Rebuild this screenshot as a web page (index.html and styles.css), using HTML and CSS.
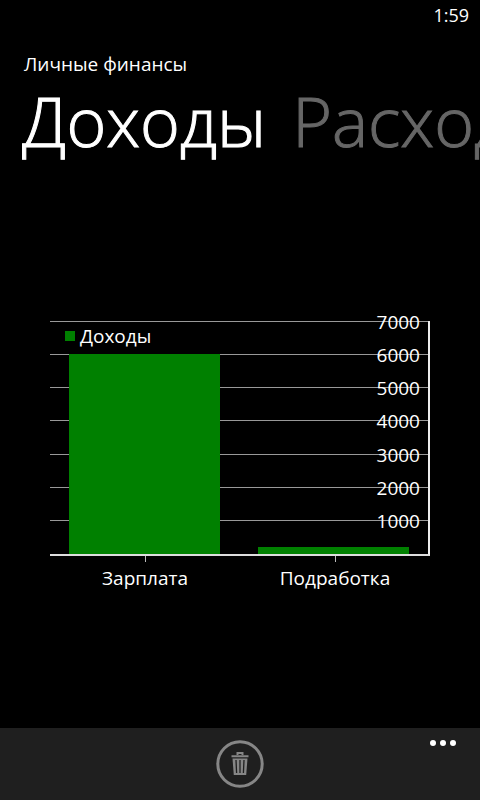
FILE: index.html
```html
<!DOCTYPE html>
<html lang="ru">
<head>
<meta charset="utf-8">
<meta name="viewport" content="width=device-width, initial-scale=1">
<title>Личные финансы</title>
<link rel="stylesheet" href="styles.css">
</head>
<body>
<div class="status"><time>1:59</time></div>
<header class="header">
  <h1 class="app-title">Личные финансы</h1>
  <nav class="pivot">
    <a class="pivot-item active" href="#income">Доходы</a>
    <a class="pivot-item" href="#expenses">Расходы</a>
  </nav>
</header>
<main class="content">
  <section class="chart">
    <div class="plot">
      <div class="grid-lines"><i></i><i></i><i></i><i></i><i></i><i></i><i></i></div>
      <div class="bars">
        <div class="bar" style="height: calc(600% / 7)"></div>
        <div class="bar" style="height: 3%"></div>
      </div>
      <ul class="scale">
        <li>7000</li><li>6000</li><li>5000</li><li>4000</li><li>3000</li><li>2000</li><li>1000</li>
      </ul>
      <div class="legend"><span class="swatch"></span>Доходы</div>
    </div>
    <div class="categories">
      <span class="category">Зарплата</span>
      <span class="category">Подработка</span>
    </div>
  </section>
</main>
<footer class="app-bar">
  <button class="delete" type="button" aria-label="Удалить">
    <svg width="48" height="48" viewBox="0 0 48 48" fill="none" stroke="#868686">
      <circle cx="24" cy="24" r="22.2" stroke-width="3"/>
      <path d="M15.5 16.2H32.5M21.5 15V13H26.5V15" stroke-width="2"/>
      <path d="M16.5 18.5H31.5L30.2 35H17.8Z" fill="#868686" stroke="none"/>
      <path d="M20 20L20.6 33M24 20V33M28 20L27.4 33" stroke="#1f1f1f" stroke-width="1.3"/>
    </svg>
  </button>
  <button class="more" type="button" aria-label="Ещё"><i></i><i></i><i></i></button>
</footer>
</body>
</html>
```
FILE: styles.css
```css
* {
  box-sizing: border-box;
}

body {
  display: flex;
  flex-direction: column;
  min-height: 100vh;
  margin: 0;
  background: #000;
  color: #fff;
  font: 19px/32px "Open Sans", "Noto Sans", sans-serif;
}

.status {
  padding: 0 11px;
  text-align: right;
  font-size: 18px;
  line-height: 30px;
}

.header {
  padding: 18px 0 0 24px;
}

.app-title {
  margin: 0;
  font-size: 19px;
  font-weight: 400;
}

.pivot {
  display: flex;
  gap: 26px;
  margin-left: -2px;
  overflow-x: clip;
  font-size: 68px;
  font-weight: 300;
  line-height: 82px;
}

.pivot-item {
  flex: none;
  color: #666;
  text-decoration: none;
  -webkit-text-stroke: 1px currentColor;
}

.pivot-item.active {
  color: #fff;
}

.content {
  display: flex;
  flex: 1;
  flex-direction: column;
  justify-content: center;
  padding: 24px 50px 0;
}

.plot {
  display: grid;
  height: 235px;
  border-right: 2px solid #eee;
  border-bottom: 2px solid #ddd;
}

.plot > * {
  grid-area: 1 / 1;
}

.grid-lines {
  display: grid;
  grid-auto-rows: 1fr;
}

.grid-lines i {
  border-top: 1px solid #999;
}

.bars {
  display: flex;
  align-items: flex-end;
  justify-content: space-around;
}

.bar {
  width: 40%;
  background: #008000;
}

.scale {
  display: grid;
  grid-auto-rows: 1fr;
  margin: -15px 8px 15px 0;
  padding: 0;
  list-style: none;
  text-align: right;
  line-height: 33px;
}

.legend {
  display: flex;
  align-items: center;
  align-self: start;
  gap: 5px;
  padding-left: 15px;
  line-height: 30px;
}

.swatch {
  width: 10px;
  height: 10px;
  background: #008000;
}

.categories {
  display: flex;
}

.category {
  display: flex;
  flex: 1;
  flex-direction: column;
  align-items: center;
}

.category::before {
  width: 1px;
  height: 6px;
  background: #bbb;
  content: "";
}

.app-bar {
  display: grid;
  grid-template-columns: 1fr auto 1fr;
  height: 72px;
  background: #1f1f1f;
}

.app-bar button {
  padding: 0;
  border: 0;
  background: none;
}

.delete {
  grid-column: 2;
}

.delete svg {
  display: block;
}

.more {
  display: flex;
  gap: 4px;
  align-self: start;
  justify-self: end;
  margin: 12px 24px;
}

.more i {
  width: 6px;
  height: 6px;
  border-radius: 50%;
  background: #fff;
}
```
